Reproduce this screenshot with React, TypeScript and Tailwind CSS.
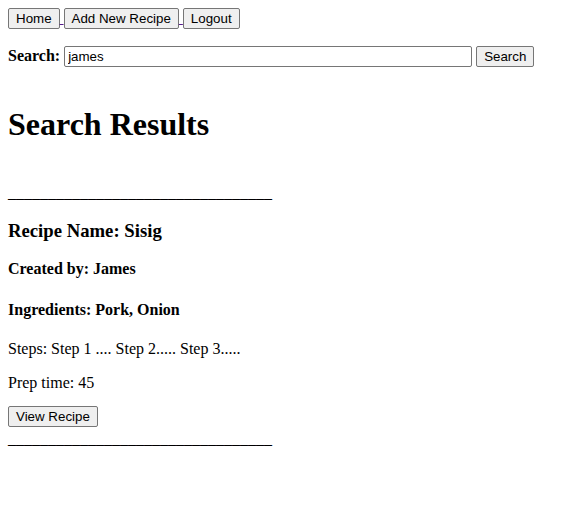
import React from "react";

const btn =
  "inline-block align-baseline font-['Liberation_Sans',Arial,sans-serif] text-[13.333px] leading-[15px] text-black bg-[#efefef] border border-[#767676] rounded-[2px] px-[7px] py-[2px] cursor-default";

const line = "_".repeat(33);

export default function App() {
  return (
    <div className="min-h-[521px] bg-white p-2 font-['Liberation_Serif','Times_New_Roman',serif] text-[16px] leading-[normal] text-black">
      <div>
        <a href="#" className="underline text-[#551a8b] decoration-[#551a8b]">
          <button className={btn}>Home</button>{" "}
        </a>
        <a href="#" className="underline text-[#551a8b] decoration-[#551a8b]">
          <button className={btn}>Add New Recipe</button>{" "}
        </a>
        <a href="#" className="underline text-[#551a8b] decoration-[#551a8b]">
          <button className={btn}>Logout</button>
        </a>
      </div>

      <form className="mt-[17px] mb-0" onSubmit={(e) => e.preventDefault()}>
        <label className="font-bold">Search:</label>{" "}
        <input
          defaultValue="james"
          className="inline-block align-baseline w-[408px] font-['Liberation_Sans',Arial,sans-serif] text-[13.333px] leading-[15px] text-black bg-white border border-[#767676] rounded-[2px] px-[3px] py-[2px] outline-none"
        />{" "}
        <button type="submit" className={btn}>
          Search
        </button>
      </form>

      <h1 className="mt-[39px] mb-0 text-[32px] font-bold leading-[normal]">
        Search Results
      </h1>

      <div className="mt-[41px]">{line}</div>

      <h3 className="mt-[17.72px] mb-0 text-[18.72px] font-bold leading-[normal]">
        Recipe Name: Sisig
      </h3>
      <h4 className="mt-[18.28px] mb-0 text-[16px] font-bold leading-[normal]">
        Created by: James
      </h4>
      <h4 className="mt-[23.28px] mb-0 text-[16px] font-bold leading-[normal]">
        Ingredients: Pork, Onion
      </h4>
      <p className="mt-[20.28px] mb-0">Steps: Step 1 .... Step 2..... Step 3.....</p>
      <p className="mt-4 mb-0">Prep time: 45</p>
      <div className="mt-[14px]">
        <a href="#" className="underline text-[#551a8b] decoration-[#551a8b]">
          <button className={btn}>View Recipe</button>
        </a>
      </div>
      <div className="mt-[3px]">{line}</div>
    </div>
  );
}
